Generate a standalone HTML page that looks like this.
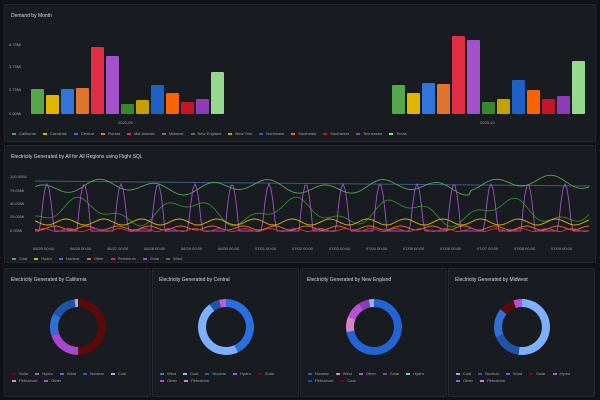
<!DOCTYPE html>
<html><head><meta charset="utf-8"><style>
*{margin:0;padding:0;box-sizing:border-box}
body{width:600px;height:400px;background:#111217;font-family:"Liberation Sans",sans-serif;color:#ccccdc;overflow:hidden;position:relative}
.p{position:absolute;background:#181b1f;border:1px solid #24272e;border-radius:2px}
.t{position:absolute;font-size:5px;color:#d8d9e0;left:6px;top:8px}
.s{font-size:4px;fill:#9fa1a8}
.lg{position:absolute;font-size:4px;color:#a0a2aa;display:flex;flex-wrap:wrap;gap:2px 7px}
.lg span:before{content:"";display:inline-block;width:4px;height:2px;margin-right:3px;vertical-align:middle;background:var(--c)}
</style></head><body>
<div class="p" style="left:4px;top:4px;width:592px;height:138px"><div class="t">Demand by Month</div></div>
<div class="p" style="left:4px;top:145px;width:592px;height:118px"><div class="t">Electricity Generated by All for All Regions using Flight SQL</div></div>
<div class="p" style="left:4px;top:268px;width:147px;height:129px"><div class="t">Electricity Generated by California</div></div>
<div class="p" style="left:152px;top:268px;width:147px;height:129px"><div class="t">Electricity Generated by Central</div></div>
<div class="p" style="left:300px;top:268px;width:147px;height:129px"><div class="t">Electricity Generated by New England</div></div>
<div class="p" style="left:448px;top:268px;width:147px;height:129px"><div class="t">Electricity Generated by Midwest</div></div>
<svg id="sv" width="600" height="400" style="position:absolute;left:0;top:0">
<g class="s"><text x="9" y="46">8.75Mi</text><text x="9" y="68">5.75Mi</text><text x="9" y="91">2.75Mi</text><text x="9" y="115">0.00Mi</text>
<text x="118" y="124">2023-06</text><text x="480" y="124">2023-10</text>
<text x="10" y="178">100.00Mi</text><text x="10" y="192">75.00Mi</text><text x="10" y="205">50.00Mi</text><text x="10" y="218">25.00Mi</text><text x="10" y="232">0.00Mi</text></g>
</svg>
<div class="lg" style="left:12px;top:131px;width:585px">
<span style="--c:#56a64b">California</span><span style="--c:#e0b400">Carolinas</span><span style="--c:#3274d9">Central</span><span style="--c:#e0752d">Florida</span><span style="--c:#e02f44">Mid-Atlantic</span><span style="--c:#a352cc">Midwest</span><span style="--c:#37872d">New England</span><span style="--c:#c4a000">New York</span><span style="--c:#1f60c4">Northwest</span><span style="--c:#fa6400">Southeast</span><span style="--c:#c4162a">Southwest</span><span style="--c:#8f3bb8">Tennessee</span><span style="--c:#96d98d">Texas</span></div>
<div class="lg" style="left:12px;top:256px"><span style="--c:#56a64b">Coal</span><span style="--c:#e0b400">Hydro</span><span style="--c:#3274d9">Nuclear</span><span style="--c:#e0752d">Other</span><span style="--c:#e02f44">Petroleum</span><span style="--c:#a352cc">Solar</span><span style="--c:#37872d">Wind</span></div>
<div class="lg" style="left:12px;top:371px;width:130px"><span style="--c:#8b0000">Solar</span><span style="--c:#b84fd8">Hydro</span><span style="--c:#3a7be0">Wind</span><span style="--c:#1f60c4">Nuclear</span><span style="--c:#8ab8ff">Coal</span><span style="--c:#d683ce">Petroleum</span><span style="--c:#a352cc">Other</span></div>
<div class="lg" style="left:160px;top:371px;width:130px"><span style="--c:#3a7be0">Wind</span><span style="--c:#8ab8ff">Coal</span><span style="--c:#1f60c4">Nuclear</span><span style="--c:#b84fd8">Hydro</span><span style="--c:#8b0000">Solar</span><span style="--c:#a352cc">Other</span><span style="--c:#d683ce">Petroleum</span></div>
<div class="lg" style="left:308px;top:371px;width:130px"><span style="--c:#1f60c4">Nuclear</span><span style="--c:#d683ce">Wind</span><span style="--c:#b84fd8">Other</span><span style="--c:#8f3bb8">Solar</span><span style="--c:#8ab8ff">Hydro</span><span style="--c:#1250b0">Petroleum</span><span style="--c:#8b0000">Coal</span></div>
<div class="lg" style="left:456px;top:371px;width:130px"><span style="--c:#8ab8ff">Coal</span><span style="--c:#1f60c4">Nuclear</span><span style="--c:#3a7be0">Wind</span><span style="--c:#8b0000">Solar</span><span style="--c:#b84fd8">Hydro</span><span style="--c:#a352cc">Other</span><span style="--c:#d683ce">Petroleum</span></div>
<script>
var sv=document.getElementById('sv'),NS='http://www.w3.org/2000/svg',h='';
var cols=['#56a64b','#e0b400','#3274d9','#e0752d','#e02f44','#a352cc','#37872d','#c4a000','#1f60c4','#fa6400','#c4162a','#8f3bb8','#96d98d'];
var t1=[89,95,89,88,47,56,104,100,85,93,102,99,72],t2=[85,93,83,84,36,40,102,99,80,90,99,96,61];
function bars(x0,t){for(var i=0;i<13;i++){h+='<rect x="'+(x0+i*15)+'" y="'+t[i]+'" width="13" height="'+(114-t[i])+'" fill="'+cols[i]+'" rx="1"/>';}}
bars(31,t1);bars(392,t2);
h+='<line x1="35" y1="181" x2="590" y2="186" stroke="#3d5a8a" stroke-width="1"/>';
function line(c,f){var d='';for(var x=35;x<=590;x+=2){d+=(x==35?'M':'L')+x+' '+f(x).toFixed(1);}h+='<path d="'+d+'" fill="none" stroke="'+c+'" stroke-width="0.9"/>';}
line('#56a64b',function(x){return 187+5*Math.sin(x/9)+3*Math.sin(x/23)-(x>470?4:0);});
line('#37872d',function(x){return 212+10*Math.sin(x/17)+5*Math.sin(x/7);});
line('#a352cc',function(x){var p=((x-40)%37+37)%37;return p<14?231-47*Math.sin(Math.PI*p/14):231;});
line('#e0b400',function(x){return 222+3*Math.sin(x/6);});
line('#e0752d',function(x){return 228+2*Math.sin(x/5);});
line('#e02f44',function(x){return 230+1.5*Math.sin(x/4);});
var xl=['06/25','06/26','06/27','06/28','06/29','06/30','07/01','07/02','07/03','07/04','07/05','07/06','07/07','07/08','07/09'];
for(var i=0;i<15;i++)h+='<text class="s" x="'+(33+i*37)+'" y="250">'+xl[i]+' 00:00</text>';
function donut(cx,cy,segs){var a=-Math.PI/2,R=28,r=20;segs.forEach(function(s){var b=a+s[0]*2*Math.PI;var l=s[0]>0.5?1:0;
h+='<path d="M'+(cx+R*Math.cos(a))+' '+(cy+R*Math.sin(a))+'A'+R+' '+R+' 0 '+l+' 1 '+(cx+R*Math.cos(b))+' '+(cy+R*Math.sin(b))+'L'+(cx+r*Math.cos(b))+' '+(cy+r*Math.sin(b))+'A'+r+' '+r+' 0 '+l+' 0 '+(cx+r*Math.cos(a))+' '+(cy+r*Math.sin(a))+'Z" fill="'+s[1]+'"/>';a=b;});}
donut(78,327,[[0.5,'#5a0a0a'],[0.2,'#a947d0'],[0.13,'#2f6fd8'],[0.15,'#1f55a8'],[0.02,'#8ab8ff']]);
donut(226,327,[[0.43,'#2a6ee0'],[0.47,'#7fb0ff'],[0.06,'#1f55a8'],[0.04,'#c45ad8']]);
donut(374,327,[[0.72,'#2563d4'],[0.09,'#d683ce'],[0.1,'#b84fd8'],[0.06,'#8f3bb8'],[0.03,'#8ab8ff']]);
donut(522,327,[[0.52,'#7fb0ff'],[0.17,'#1f55a8'],[0.17,'#2f6fd8'],[0.09,'#5a0a0a'],[0.05,'#b84fd8']]);
sv.innerHTML+=h;
</script>
</body></html>
